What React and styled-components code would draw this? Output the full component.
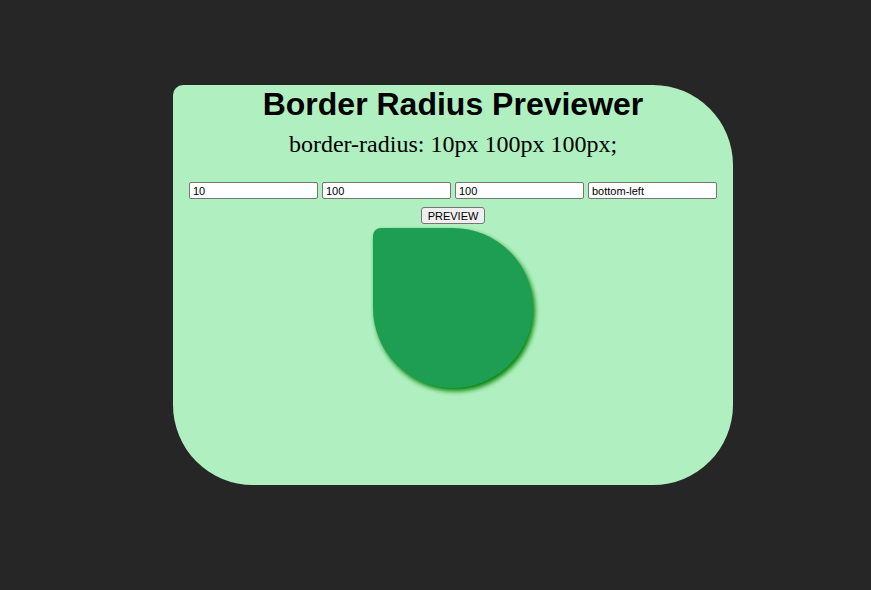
import styled, { createGlobalStyle } from "styled-components";

const GlobalStyle = createGlobalStyle`
  html, body {
    margin: 0;
    padding: 0;
    background: #262626;
  }
`;

const corners = ["10", "100", "100", "bottom-left"];

const App = () => {
  return (
    <>
      <GlobalStyle />
      <Page>
        <Card>
          <Title>Border Radius Previewer</Title>
          <Subtitle>border-radius: 10px 100px 100px;</Subtitle>
          <InputRow>
            {corners.map((value, i) => (
              <RadiusInput key={i} type="text" defaultValue={value} />
            ))}
          </InputRow>
          <PreviewBtn type="button">PREVIEW</PreviewBtn>
          <Shape />
        </Card>
      </Page>
    </>
  );
};

export default App;

const Page = styled.div`
  min-height: 590px;
  box-sizing: border-box;
  padding: 85px 0 0 173px;
  display: flex;
  align-items: flex-start;
`;

const Card = styled.div`
  width: 560px;
  height: 400px;
  box-sizing: border-box;
  padding: 1px 16px 0;
  background-color: #b0f0c0;
  border-radius: 10px 80px 80px 80px;
  display: flex;
  flex-direction: column;
  align-items: center;
`;

const Title = styled.h1`
  margin: 0;
  font-family: "Liberation Sans", Arial, sans-serif;
  font-size: 32px;
  font-weight: 700;
  line-height: 37px;
  color: #000;
`;

const Subtitle = styled.p`
  margin: 7px 0 24px;
  font-family: "Liberation Serif", "Times New Roman", serif;
  font-size: 24px;
  line-height: 28px;
  color: #000;
`;

const InputRow = styled.div`
  display: flex;
  gap: 4px;
  width: 100%;
`;

const RadiusInput = styled.input`
  flex: 1;
  min-width: 0;
  height: 17px;
  box-sizing: border-box;
  margin: 0;
  padding: 0 3px;
  border: 1px solid #767676;
  border-radius: 2px;
  background: #fff;
  font-family: "Liberation Sans", Arial, sans-serif;
  font-size: 11px;
  color: #000;
  outline: none;
`;

const PreviewBtn = styled.button`
  margin-top: 8px;
  height: 17px;
  box-sizing: border-box;
  padding: 0 6px;
  border: 1px solid #767676;
  border-radius: 3px;
  background: #efefef;
  font-family: "Liberation Sans", Arial, sans-serif;
  font-size: 11px;
  line-height: 14px;
  color: #000;
  cursor: pointer;
`;

const Shape = styled.div`
  margin-top: 4px;
  width: 160px;
  height: 160px;
  background-color: #1e9e52;
  border-radius: 10px 100px 100px;
  box-shadow: 2px 3px 5px #008000;
`;
